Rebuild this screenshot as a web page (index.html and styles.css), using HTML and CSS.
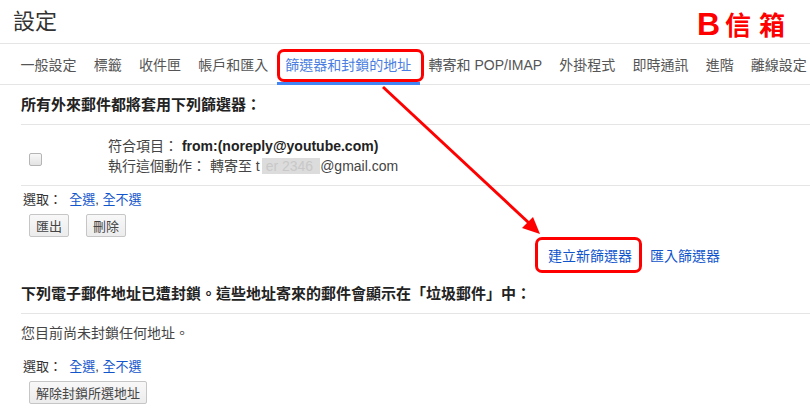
FILE: index.html
```html
<!DOCTYPE html>
<html lang="zh-Hant">
<head>
    <meta charset="UTF-8">
    <title>設定</title>
    <link rel="stylesheet" href="styles.css">
</head>
<body>
    <div class="page">
        <div class="top">
            <h1 class="title">設定</h1>
            <div class="brand"><span class="brand-b">B</span><span class="brand-zh">信箱</span></div>
        </div>

        <nav class="tabs">
            <a class="tab">一般設定</a>
            <a class="tab">標籤</a>
            <a class="tab">收件匣</a>
            <a class="tab">帳戶和匯入</a>
            <a class="tab active">篩選器和封鎖的地址</a>
            <a class="tab">轉寄和 POP/IMAP</a>
            <a class="tab">外掛程式</a>
            <a class="tab">即時通訊</a>
            <a class="tab">進階</a>
            <a class="tab">離線設定</a>
        </nav>

        <!-- filters -->
        <section class="panel">
            <h2 class="panel-head">所有外來郵件都將套用下列篩選器：</h2>
            <div class="filter-row">
                <span class="check"></span>
                <div class="filter-text">
                    <div>符合項目： <b class="mono-bold">from:(noreply@youtube.com)</b></div>
                    <div>執行這個動作： 轉寄至 t<span class="blur">er 2346</span>@gmail.com</div>
                </div>
            </div>
            <div class="select-row">選取：&nbsp; <a class="link">全選</a>, <a class="link">全不選</a></div>
            <div class="btn-row">
                <button class="btn">匯出</button>
                <button class="btn">刪除</button>
            </div>
            <div class="create-row">
                <a class="link">建立新篩選器</a>
                <a class="link">匯入篩選器</a>
            </div>
        </section>

        <!-- blocked addresses -->
        <section class="panel">
            <h2 class="panel-head">下列電子郵件地址已遭封鎖。這些地址寄來的郵件會顯示在「垃圾郵件」中：</h2>
            <p class="empty">您目前尚未封鎖任何地址。</p>
            <div class="select-row second">選取：&nbsp; <a class="link">全選</a>, <a class="link">全不選</a></div>
            <div class="btn-row">
                <button class="btn">解除封鎖所選地址</button>
            </div>
        </section>

        <!-- annotations -->
        <div class="mark mark-tab"></div>
        <div class="mark mark-create"></div>
        <svg class="arrow" width="810" height="416" viewBox="0 0 810 416">
            <line x1="383" y1="87" x2="529" y2="223" stroke="#f00" stroke-width="3"/>
            <polygon points="540,234 522,228 533,217" fill="#f00"/>
        </svg>
    </div>
</body>
</html>
```

FILE: styles.css
```css
body {
    margin: 0;
    font-family: "Liberation Sans", "Noto Sans CJK TC", sans-serif;
    color: #222;
    background: #fff;
}
.page {
    position: relative;
    width: 810px;
    height: 416px;
    overflow: hidden;
}
.top {
    height: 43px;
    border-bottom: 1px solid #e5e5e5;
    display: flex;
    align-items: center;
    justify-content: space-between;
    padding: 0 25px 0 13px;
}
.title {
    margin: 0;
    font-size: 22px;
    font-weight: normal;
    line-height: 42px;
    color: #333;
}
.brand {
    color: #f00;
    display: flex;
    align-items: baseline;
    margin-top: 4px;
}
.brand-b {
    font-size: 32px;
    font-weight: bold;
    font-family: "Liberation Sans", sans-serif;
}
.brand-zh {
    font-size: 26px;
    font-weight: bold;
    letter-spacing: 8px;
    margin-left: 5px;
    margin-right: -8px;
}
.tabs {
    height: 40px;
    border-bottom: 1px solid #e5e5e5;
    display: flex;
    padding-left: 12px;
    white-space: nowrap;
}
.tab {
    font-size: 14px;
    line-height: 40px;
    padding: 1px 8.6px 0;
    color: #555;
    box-sizing: border-box;
    height: 41px;
}
.tab.active {
    color: #4a7ee0;
    border-bottom: 3px solid #4285f4;
}
.panel {
    padding-left: 21px;
}
.panel-head {
    margin: 0;
    height: 39px;
    line-height: 40px;
    font-size: 15px;
    font-weight: bold;
    border-bottom: 1px solid #e5e5e5;
    white-space: nowrap;
}
.filter-row {
    display: flex;
    align-items: center;
    height: 60px;
    border-bottom: 1px solid #e5e5e5;
    box-sizing: border-box;
    margin-top: 1px;
}
.check {
    width: 11px;
    height: 11px;
    border: 1px solid #b5b5b5;
    border-radius: 2px;
    background: linear-gradient(#f8f8f8, #e3e3e3);
    margin: 8px 0 0 8px;
}
.filter-text {
    margin-left: 66px;
    font-size: 14px;
    line-height: 20px;
    color: #444;
}
.mono-bold {
    color: #222;
}
.blur {
    background: #dcdcdc;
    color: #c8c8c8;
    padding: 0 7px 0 4px;
    margin-left: 2px;
}
.select-row {
    font-size: 13px;
    line-height: 18px;
    padding: 5px 0 0 2px;
    color: #333;
}
.link {
    color: #15c;
    cursor: pointer;
}
.btn-row {
    display: flex;
    gap: 17px;
    margin: 5px 0 0 8px;
}
.btn {
    font-family: inherit;
    font-size: 13px;
    height: 23px;
    padding: 0 6px;
    color: #444;
    border: 1px solid #c6c6c6;
    border-radius: 2px;
    background: linear-gradient(#f8f8f8, #ececec);
}
.create-row {
    display: flex;
    gap: 18px;
    font-size: 14px;
    line-height: 20px;
    margin: 9px 0 8px 527px;
}
.empty {
    margin: 9px 0 0;
    font-size: 14px;
    line-height: 20px;
    color: #444;
}
.select-row.second {
    padding-top: 14px;
    line-height: 20px;
}
.select-row.second + .btn-row {
    margin-top: 4px;
}
.mark {
    position: absolute;
    border: 3px solid #f00;
    border-radius: 7px;
    box-sizing: border-box;
}
.mark-tab {
    left: 277px;
    top: 49px;
    width: 147px;
    height: 33px;
}
.mark-create {
    left: 535px;
    top: 237px;
    width: 107px;
    height: 36px;
}
.arrow {
    position: absolute;
    left: 0;
    top: 0;
    pointer-events: none;
}
```
